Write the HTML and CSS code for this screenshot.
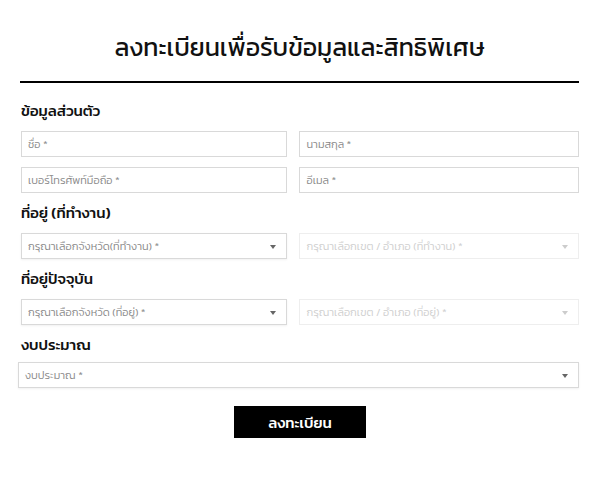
FILE: index.html
```html
<!DOCTYPE html>
<html lang="th">
<head>
    <meta charset="UTF-8">
    <meta name="viewport" content="width=device-width, initial-scale=1.0">
    <title>ลงทะเบียน</title>
    <link rel="stylesheet" href="styles.css">
</head>
<body>
    <div class="container">
        <h1 class="title">ลงทะเบียนเพื่อรับข้อมูลและสิทธิพิเศษ</h1>
        <form class="reg-form">
            <h2 class="section">ข้อมูลส่วนตัว</h2>
            <div class="row">
                <div class="field">ชื่อ *</div>
                <div class="field">นามสกุล *</div>
            </div>
            <div class="row">
                <div class="field">เบอร์โทรศัพท์มือถือ *</div>
                <div class="field">อีเมล *</div>
            </div>

            <h2 class="section">ที่อยู่ (ที่ทำงาน)</h2>
            <div class="row">
                <div class="field select">กรุณาเลือกจังหวัด(ที่ทำงาน) *<span class="caret"></span></div>
                <div class="field select disabled">กรุณาเลือกเขต / อำเภอ (ที่ทำงาน) *<span class="caret"></span></div>
            </div>

            <h2 class="section">ที่อยู่ปัจจุบัน</h2>
            <div class="row">
                <div class="field select">กรุณาเลือกจังหวัด (ที่อยู่) *<span class="caret"></span></div>
                <div class="field select disabled">กรุณาเลือกเขต / อำเภอ (ที่อยู่) *<span class="caret"></span></div>
            </div>

            <h2 class="section">งบประมาณ</h2>
            <div class="field select wide">งบประมาณ *<span class="caret"></span></div>

            <div class="actions">
                <button type="button" class="submit">ลงทะเบียน</button>
            </div>
        </form>
    </div>
</body>
</html>
```

FILE: styles.css
```css
/* Page base */
body {
    margin: 0;
    font-family: "Kanit", "Noto Sans", sans-serif;
    background: #ffffff;
    color: #111;
}

.container {
    padding: 0 21px 0 20px;
}

/* Heading with rule under it */
.title {
    margin: 0;
    padding: 31px 0 18px;
    text-align: center;
    font-size: 25px;
    font-weight: 400;
    line-height: 32px;
    border-bottom: 2px solid #000;
}

.section {
    margin: 0;
    padding: 0 0 0 1px;
    font-size: 15px;
    font-weight: 500;
    line-height: 20px;
    height: 20px;
}

.reg-form {
    display: flex;
    flex-direction: column;
    padding-top: 18px;
}

.reg-form .section + .row {
    margin-top: 10px;
}

.reg-form .section + .wide {
    margin-top: 7px;
}

.row {
    display: grid;
    grid-template-columns: 266fr 279fr;
    gap: 12px;
    margin-left: 1px;
    margin-bottom: 10px;
}

/* Inputs and selects */
.field {
    height: 26px;
    box-sizing: border-box;
    border: 1px solid #d9d9d9;
    padding: 0 6px;
    font-size: 11px;
    font-weight: 300;
    line-height: 24px;
    color: #8a8a8a;
    position: relative;
    white-space: nowrap;
    overflow: hidden;
}

.select {
    box-shadow: 0 1px 2px rgba(0, 0, 0, 0.06);
}

.disabled {
    border-color: #eeeeee;
    color: #cfcfcf;
    box-shadow: none;
}

.caret {
    position: absolute;
    right: 10px;
    top: 11px;
    border-left: 3.5px solid transparent;
    border-right: 3.5px solid transparent;
    border-top: 4px solid #666;
}

.disabled .caret {
    border-top-color: #cccccc;
}

.wide {
    margin-left: -2px;
    margin-bottom: 18px;
}

/* Submit button */
.actions {
    display: flex;
    justify-content: center;
}

.submit {
    width: 132px;
    height: 32px;
    margin-left: 1px;
    border: none;
    background: #000;
    color: #fff;
    font-family: inherit;
    font-size: 15px;
    font-weight: 500;
    cursor: pointer;
}
```
